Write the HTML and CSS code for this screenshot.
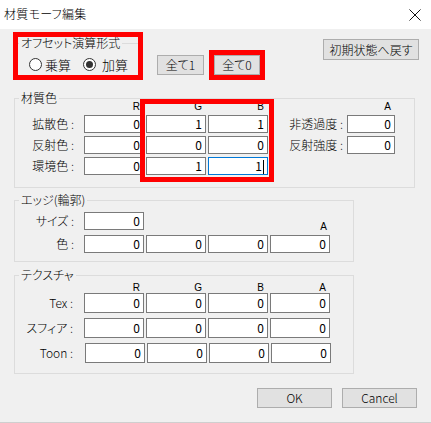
FILE: index.html
```html
<!DOCTYPE html>
<html lang="ja">
<head>
<meta charset="utf-8">
<title>材質モーフ編集</title>
<link rel="stylesheet" href="styles.css">
</head>
<body>
<div class="window">
  <div class="titlebar">
    <span class="title">材質モーフ編集</span>
    <svg class="close" width="12" height="12" viewBox="0 0 12 12"><path d="M0.5 0.5L11.5 11.5M11.5 0.5L0.5 11.5" stroke="#111" stroke-width="1" fill="none"/></svg>
  </div>
  <div class="content">
    <div class="toprow">
      <fieldset class="group offset">
        <legend>オフセット演算形式</legend>
        <div class="radios">
          <label class="radio"><span class="dot"></span>乗算</label>
          <label class="radio on second"><span class="dot"></span>加算</label>
        </div>
      </fieldset>
      <button class="btn all1">全て1</button>
      <button class="btn all0">全て0</button>
      <button class="btn reset">初期状態へ戻す</button>
    </div>

    <fieldset class="group g-color">
      <legend>材質色</legend>
      <div class="grid hdr c6"><span></span><span>R</span><span>G</span><span>B</span><span></span><span>A</span></div>
      <div class="grid rows c6">
        <span class="lbl">拡散色 :</span><div class="inp">0</div><div class="inp">1</div><div class="inp">1</div><span class="lbl lbl2">非透過度 :</span><div class="inp">0</div>
        <span class="lbl">反射色 :</span><div class="inp">0</div><div class="inp">0</div><div class="inp">0</div><span class="lbl lbl2">反射強度 :</span><div class="inp">0</div>
        <span class="lbl">環境色 :</span><div class="inp">0</div><div class="inp">1</div><div class="inp focus">1<span class="caret"></span></div>
      </div>
    </fieldset>

    <fieldset class="group g-edge">
      <legend>エッジ(輪郭)</legend>
      <div class="grid rows edge-rows c5">
        <span class="lbl">サイズ :</span><div class="inp">0</div><span class="hd-a">A</span>
        <span class="lbl">色 :</span><div class="inp">0</div><div class="inp">0</div><div class="inp">0</div><div class="inp">0</div>
      </div>
    </fieldset>

    <fieldset class="group g-tex">
      <legend>テクスチャ</legend>
      <div class="grid hdr hdr-tex c5"><span></span><span>R</span><span>G</span><span>B</span><span>A</span></div>
      <div class="grid rows tex-rows c5">
        <span class="lbl">Tex :</span><div class="inp">0</div><div class="inp">0</div><div class="inp">0</div><div class="inp">0</div>
        <span class="lbl">スフィア :</span><div class="inp">0</div><div class="inp">0</div><div class="inp">0</div><div class="inp">0</div>
        <span class="lbl">Toon :</span><div class="inp nudge">0</div><div class="inp nudge">0</div><div class="inp nudge">0</div><div class="inp nudge">0</div>
      </div>
    </fieldset>

    <div class="actions">
      <button class="btn wide">OK</button>
      <button class="btn wide">Cancel</button>
    </div>
  </div>

  <div class="anno a1"></div>
  <div class="anno a2"></div>
  <div class="anno a3"></div>
</div>
</body>
</html>
```

FILE: styles.css
```css
* { box-sizing: border-box; }
html, body { margin: 0; padding: 0; }
body {
  width: 431px;
  height: 423px;
  overflow: hidden;
  background: #f0f0f0;
  font-family: "Noto Sans CJK JP", "Noto Sans", sans-serif;
  font-weight: 300;
  font-feature-settings: "palt";
  font-size: 12px;
  color: #000;
}
.window {
  position: relative;
  width: 431px;
  height: 423px;
  background: #f0f0f0;
  border-bottom: 1px solid #cfcfcf;
}
.titlebar {
  height: 29px;
  background: #fff;
  display: flex;
  align-items: center;
  justify-content: space-between;
  padding: 0 10px 2px 4px;
  line-height: 14px;
}
.title { font-size: 12px; letter-spacing: 0.3px; }
.close { display: block; margin-top: 2px; }

.content { padding-left: 14px; }

.toprow {
  height: 62px;
  display: flex;
  align-items: flex-start;
  padding-top: 8px;
}

fieldset.group {
  margin: 0;
  padding: 0;
  border: 1px solid #dcdcdc;
  min-inline-size: 0;
}
fieldset.group legend {
  padding: 0 2px;
  margin-left: 4px;
  font-size: 12px;
  line-height: 14px;
}

.offset {
  margin-left: 1px !important;
  width: 126px;
  padding-bottom: 5px !important;
}
.offset legend { line-height: 12px !important; margin-left: 3px !important; }
.radios {
  display: flex;
  align-items: center;
  margin-top: 9px;
  padding-left: 13px;
  height: 13px;
}
.radio {
  display: flex;
  align-items: center;
  gap: 3px;
  line-height: 13px;
  font-size: 13px;
}
.radio.second { margin-left: 12px; }
.radio.second .dot { margin-right: 3px; }
.dot {
  width: 13px;
  height: 13px;
  border: 1px solid #333;
  border-radius: 50%;
  background: #fff;
  display: flex;
  align-items: center;
  justify-content: center;
}
.radio.on .dot::after {
  content: "";
  width: 7px;
  height: 7px;
  border-radius: 50%;
  background: #333;
}

.btn {
  font-family: "Noto Sans CJK JP", "Noto Sans", sans-serif;
  font-weight: 300;
  font-feature-settings: "palt";
  font-size: 12px;
  line-height: 14px;
  color: #000;
  background: #e1e1e1;
  border: 1px solid #adadad;
  padding: 0;
  height: 20px;
  display: flex;
  align-items: center;
  justify-content: center;
}
.all1 { margin-left: 16px; margin-top: 18px; width: 47px; }
.all0 { margin-left: 10px; margin-top: 18px; width: 46px; }
.reset { margin-left: auto; margin-right: 12px; margin-top: 2px; width: 96px; height: 21px; }

.g-color { width: 401px; padding-bottom: 12px !important; }
.g-edge { width: 340px; margin-top: 5px !important; padding-bottom: 8px !important; }
.g-tex { width: 340px; margin-top: 6px !important; padding-bottom: 10px !important; }

.grid { display: grid; column-gap: 2px; }
.c6 { grid-template-columns: 67px 60px 60px 60px 75px 48px; }
.c5 { grid-template-columns: 67px 60px 60px 60px 60px; }

.hdr {
  height: 10px;
  margin-top: -3px;
  font-family: "Liberation Sans", sans-serif;
  font-weight: 400;
  font-size: 10px;
  line-height: 10px;
}
.hdr span { text-align: right; padding-right: 4px; }
.hdr-tex { margin-top: 1px; }

.rows {
  margin-top: 3px;
  grid-auto-rows: 18px;
  row-gap: 3px;
  align-items: center;
}
.edge-rows { margin-top: 5px; row-gap: 5px; }
.tex-rows { margin-top: 0; grid-auto-rows: 20px; row-gap: 5px; }

.lbl {
  text-align: right;
  padding-right: 8px;
  white-space: nowrap;
  line-height: 14px;
}
.lbl2 { padding-right: 2px; }
.tex-rows .lbl { padding-right: 9px; }

.inp {
  height: 100%;
  background: #fff;
  border: 1px solid #7a7a7a;
  text-align: right;
  padding-right: 3px;
  font-family: "Liberation Sans Narrow", "Noto Sans CJK JP", sans-serif;
  font-weight: 400;
  font-size: 12px;
  line-height: 16px;
}
.tex-rows .inp { line-height: 18px; }
.inp.focus { border-color: #0078d7; }
.inp.nudge { margin-left: 1px; margin-right: -1px; }
.caret {
  display: inline-block;
  width: 1px;
  height: 14px;
  background: #000;
  vertical-align: -3px;
  margin-left: 1px;
}

.hd-a {
  grid-column: 5;
  align-self: end;
  margin-bottom: -2px;
  text-align: right;
  padding-right: 3px;
  font-family: "Liberation Sans", sans-serif;
  font-weight: 400;
  font-size: 10px;
  line-height: 10px;
}

.actions {
  display: flex;
  justify-content: flex-end;
  gap: 10px;
  margin-top: 14px;
  padding-right: 14px;
}
.wide { width: 75px; height: 20px; }

.anno {
  position: absolute;
  border: 5px solid #f00;
  pointer-events: none;
}
.a1 { left: 13px; top: 32px; width: 130px; height: 48px; }
.a2 { left: 209px; top: 50px; width: 56px; height: 30px; }
.a3 { left: 140px; top: 99px; width: 134px; height: 83px; }
```
